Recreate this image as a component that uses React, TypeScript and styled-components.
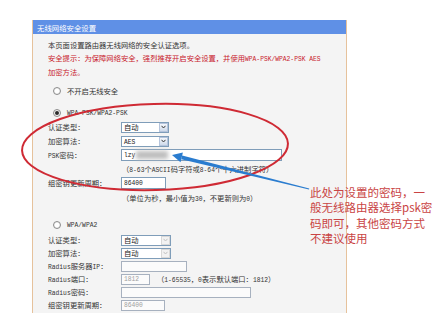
import React from "react";
import styled, { createGlobalStyle } from "styled-components";

const GlobalStyle = createGlobalStyle`
  html, body {
    margin: 0;
    padding: 0;
    background: #ffffff;
  }
`;

const Stage = styled.div`
  position: relative;
  width: 448px;
  height: 313px;
  overflow: hidden;
  background: #ffffff;
  font-family: "Noto Sans CJK SC", "Noto Sans", sans-serif;
  font-size: 7.3px;
  color: #333333;
`;

const Panel = styled.div`
  margin: 20px 0 0 32px;
  width: 313px;
  min-height: 320px;
  background: #f4f4f4;
  border-left: 1px solid #e6c29c;
  border-right: 1px solid #e6c29c;
`;

const TitleBar = styled.div`
  height: 14px;
  display: flex;
  align-items: center;
  padding-left: 4px;
  background: #5f90e6;
  color: #ffffff;
  font-size: 7.4px;
`;

const Body = styled.div`
  padding: 5px 0 0 15px;
`;

const Para = styled.div<{ $red?: boolean }>`
  line-height: 12.5px;
  color: ${(p) => (p.$red ? "#c8202c" : "#333333")};
`;

const RadioRow = styled.div<{ $gap: number }>`
  margin-top: ${(p) => p.$gap}px;
  height: 14px;
  display: flex;
  align-items: center;
  gap: 6px;
  padding-left: 5px;
`;

const Radio = styled.span<{ $on?: boolean }>`
  width: 8px;
  height: 8px;
  box-sizing: border-box;
  border-radius: 50%;
  border: 1px solid #8c8c8c;
  background: radial-gradient(circle, #ffffff 40%, #dcdcdc 100%);
  display: flex;
  align-items: center;
  justify-content: center;

  &::after {
    content: "";
    display: ${(p) => (p.$on ? "block" : "none")};
    width: 4px;
    height: 4px;
    border-radius: 50%;
    background: #2b2b2b;
  }
`;

const FieldRow = styled.div<{ $h: number; $top?: number }>`
  height: ${(p) => p.$h}px;
  margin-top: ${(p) => p.$top || 0}px;
  display: grid;
  grid-template-columns: 73px auto;
  align-items: center;
`;

const Controls = styled.div`
  display: flex;
  align-items: center;
  gap: 7px;
`;

const Hint = styled.div`
  height: 13px;
  display: flex;
  align-items: center;
  padding-left: 74px;
`;

const Latin = styled.span`
  font-family: "Liberation Mono", "DejaVu Sans Mono", monospace;
  font-size: 6.3px;
`;

const SelectBox = styled.div<{ $w: number; $off?: boolean }>`
  width: ${(p) => p.$w}px;
  height: 11px;
  box-sizing: border-box;
  border: 1px solid #7f9db9;
  background: #ffffff;
  display: flex;
  align-items: center;
  justify-content: space-between;
  padding: 0 0 0 2px;
  color: #222222;
`;

const SelectButton = styled.span<{ $off?: boolean }>`
  width: 9px;
  height: 9px;
  box-sizing: border-box;
  border: 1px solid ${(p) => (p.$off ? "#d8d8d8" : "#b5c4dc")};
  background: ${(p) =>
    p.$off ? "#f2f2f2" : "linear-gradient(#f4f7fc, #cfdaea)"};
  display: flex;
  align-items: center;
  justify-content: center;
`;

const TextInput = styled.div<{ $w: number; $h?: number; $off?: boolean }>`
  width: ${(p) => p.$w}px;
  height: ${(p) => p.$h || 12}px;
  box-sizing: border-box;
  border: 1px solid ${(p) => (p.$off ? "#a7b1bf" : "#7f9db9")};
  background: ${(p) => (p.$off ? "#fbfbfb" : "#ffffff")};
  color: ${(p) => (p.$off ? "#a0a0a0" : "#222222")};
  display: flex;
  align-items: center;
  padding-left: 2px;
`;

const Smudge = styled.span`
  display: inline-block;
  width: 32px;
  height: 8px;
  margin-left: 1px;
  background: #bdbdbd;
  filter: blur(2px);
`;

const Overlay = styled.svg`
  position: absolute;
  left: 0;
  top: 0;
  pointer-events: none;
`;

const Note = styled.div`
  position: absolute;
  left: 310px;
  top: 185px;
  font-size: 11.5px;
  line-height: 15.3px;
  color: #c94444;
  white-space: nowrap;
`;

const Chevron: React.FC<{ off?: boolean }> = ({ off }) => (
  <svg width="5" height="4" viewBox="0 0 5 4">
    <path d="M0.5 0.8 L2.5 3 L4.5 0.8" fill="none" stroke={off ? "#c0c0c0" : "#3a3a3a"} strokeWidth="1" />
  </svg>
);

const Select: React.FC<{ w: number; value: React.ReactNode; off?: boolean }> = ({ w, value, off }) => (
  <SelectBox $w={w} $off={off}>
    <span>{value}</span>
    <SelectButton $off={off}>
      <Chevron off={off} />
    </SelectButton>
  </SelectBox>
);

export default function App() {
  return (
    <>
      <GlobalStyle />
      <Stage>
        <Panel>
          <TitleBar>无线网络安全设置</TitleBar>
          <Body>
            <Para>本页面设置路由器无线网络的安全认证选项。</Para>
            <Para $red>
              安全提示：为保障网络安全，强烈推荐开启安全设置，并使用<Latin>WPA-PSK/WPA2-PSK AES</Latin>
            </Para>
            <Para $red>加密方法。</Para>

            <RadioRow $gap={5.5}>
              <Radio />
              <span>不开启无线安全</span>
            </RadioRow>

            <RadioRow $gap={8}>
              <Radio $on />
              <Latin>WPA-PSK/WPA2-PSK</Latin>
            </RadioRow>
            <FieldRow $h={14}>
              <span>认证类型：</span>
              <Select w={48} value="自动" />
            </FieldRow>
            <FieldRow $h={14}>
              <span>加密算法：</span>
              <Select w={48} value={<Latin>AES</Latin>} />
            </FieldRow>
            <FieldRow $h={14}>
              <span><Latin>PSK</Latin>密码：</span>
              <TextInput $w={161}>
                <Latin>lzy</Latin>
                <Smudge />
              </TextInput>
            </FieldRow>
            <Hint>
              <span>（<Latin>8-63</Latin>个<Latin>ASCII</Latin>码字符或<Latin>8-64</Latin>个十六进制字符）</span>
            </Hint>
            <FieldRow $h={16}>
              <span>组密钥更新周期：</span>
              <TextInput $w={45} $h={12}>
                <Latin>86400</Latin>
              </TextInput>
            </FieldRow>
            <Hint>
              <span>（单位为秒，最小值为<Latin>30</Latin>，不更新则为<Latin>0</Latin>）</span>
            </Hint>

            <RadioRow $gap={14}>
              <Radio />
              <Latin>WPA/WPA2</Latin>
            </RadioRow>
            <FieldRow $h={13} $top={1.5}>
              <span>认证类型：</span>
              <Select w={50} value="自动" off />
            </FieldRow>
            <FieldRow $h={13}>
              <span>加密算法：</span>
              <Select w={50} value="自动" off />
            </FieldRow>
            <FieldRow $h={13}>
              <span><Latin>Radius</Latin>服务器<Latin>IP</Latin>：</span>
              <TextInput $w={66} $h={11} $off />
            </FieldRow>
            <FieldRow $h={13}>
              <span><Latin>Radius</Latin>端口：</span>
              <Controls>
                <TextInput $w={29} $h={11} $off>
                  <Latin>1812</Latin>
                </TextInput>
                <span>（<Latin>1-65535</Latin>，<Latin>0</Latin>表示默认端口：<Latin>1812</Latin>）</span>
              </Controls>
            </FieldRow>
            <FieldRow $h={13}>
              <span><Latin>Radius</Latin>密码：</span>
              <TextInput $w={130} $h={11} $off />
            </FieldRow>
            <FieldRow $h={13}>
              <span>组密钥更新周期：</span>
              <TextInput $w={44} $h={11} $off>
                <Latin>86400</Latin>
              </TextInput>
            </FieldRow>
          </Body>
        </Panel>

        <Overlay width="448" height="313" viewBox="0 0 448 313">
          <ellipse
            cx="155"
            cy="147"
            rx="133"
            ry="43"
            transform="rotate(-1.5 155 147)"
            fill="none"
            stroke="#cf2a34"
            strokeWidth="2"
          />
          <polygon
            points="172,155 182.9,152.4 180.5,162.2"
            fill="#2a7ccf"
          />
          <polygon
            points="182.2,155.4 181.2,159.3 309,189.6 309.2,188.6"
            fill="#2a7ccf"
          />
        </Overlay>

        <Note>
          此处为设置的密码，一
          <br />
          般无线路由器选择psk密
          <br />
          码即可，其他密码方式
          <br />
          不建议使用
        </Note>
      </Stage>
    </>
  );
}
